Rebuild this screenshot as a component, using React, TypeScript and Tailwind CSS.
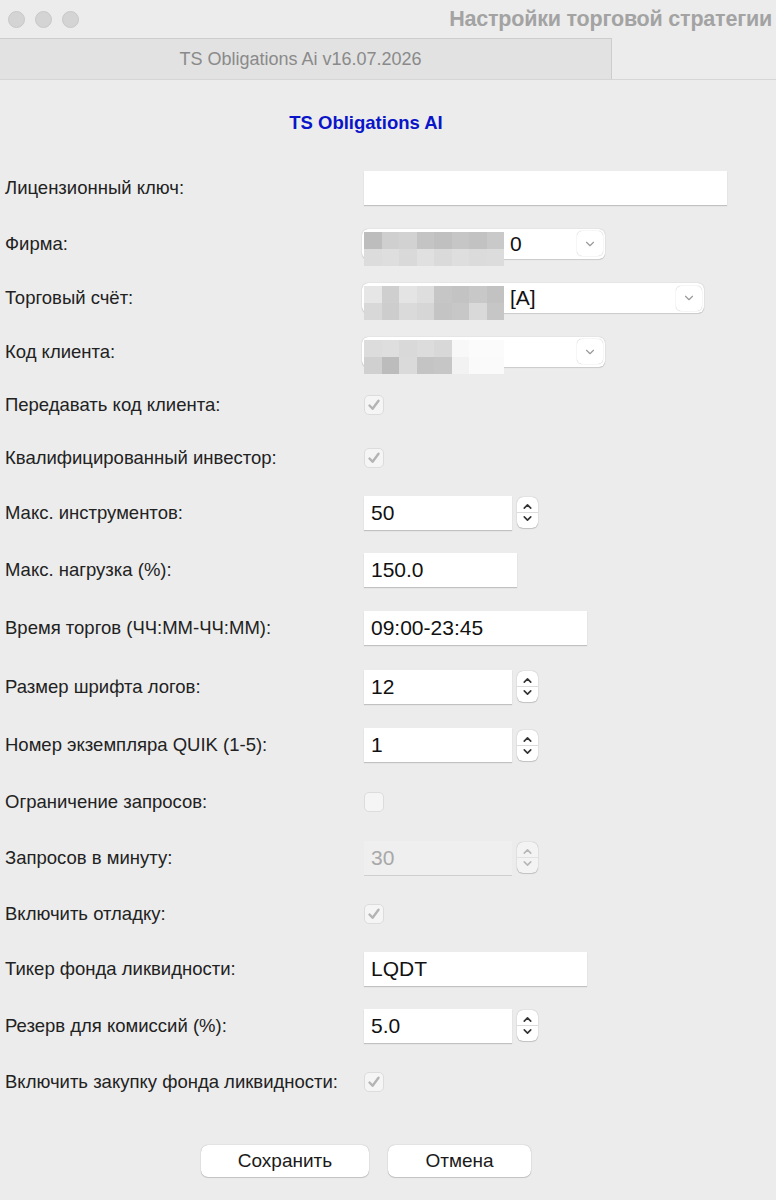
import { ChevronDown, ChevronUp } from 'lucide-react';

const font = "font-['Liberation_Sans','Helvetica',sans-serif]";

function Mosaic({ cells }: { cells: string[][] }) {
  return (
    <div className="absolute left-[2px] top-[3px] flex flex-col">
      {cells.map((row, r) => (
        <div key={r} className="flex">
          {row.map((c, i) => (
            <div key={i} className={`h-[17px] w-[17.5px] ${c}`} />
          ))}
        </div>
      ))}
    </div>
  );
}

function TextField({ value = '', w, disabled = false }: { value?: string; w: string; disabled?: boolean }) {
  return (
    <div
      className={`flex h-[34px] items-center px-[7px] text-[21px] ${w} ${
        disabled
          ? 'bg-[#efefef] text-[#a8a8a8] shadow-[0_1px_0_rgba(0,0,0,0.12)]'
          : 'bg-white text-[#111] shadow-[0_1px_1px_rgba(0,0,0,0.18)]'
      }`}
    >
      {value}
    </div>
  );
}

function Spinner({ value, disabled = false }: { value: string; disabled?: boolean }) {
  return (
    <div className="flex items-center gap-[5px]">
      <TextField value={value} w="w-[148px]" disabled={disabled} />
      <div
        className={`flex h-[31px] w-[21px] flex-col items-center justify-center rounded-[6px] shadow-[0_0_1px_rgba(0,0,0,0.35),0_1px_1px_rgba(0,0,0,0.15)] ${
          disabled ? 'bg-[#f3f3f3] text-[#b8b8b8]' : 'bg-white text-[#333]'
        }`}
      >
        <ChevronUp size={13} strokeWidth={3} className="-mb-[1px]" />
        <div className={`h-px w-full ${disabled ? 'bg-[#e2e2e2]' : 'bg-[#dcdcdc]'}`} />
        <ChevronDown size={13} strokeWidth={3} className="-mt-[1px]" />
      </div>
    </div>
  );
}

function Combo({ w, text, cells }: { w: string; text: string; cells: string[][] }) {
  return (
    <div
      className={`relative -ml-[2px] flex h-[30px] items-center justify-between rounded-[6px] bg-white pr-[2px] shadow-[0_0_1px_rgba(0,0,0,0.3),0_1px_1px_rgba(0,0,0,0.12)] ${w}`}
    >
      <span className="pl-[148px] text-[21px] text-[#111]">{text}</span>
      <div className="flex h-[25px] w-[26px] items-center justify-center rounded-[5px] bg-white text-[#9a9a9a] shadow-[0_0_1px_rgba(0,0,0,0.35)]">
        <ChevronDown size={14} strokeWidth={2} />
      </div>
      <Mosaic cells={cells} />
    </div>
  );
}

function Check({ checked }: { checked: boolean }) {
  return (
    <div className="flex h-[20px] w-[20px] items-center justify-center rounded-[5px] border border-[#dcdcdc] bg-[#f5f5f5]">
      {checked && (
        <svg width="14" height="14" viewBox="0 0 14 14" fill="none">
          <path d="M2.5 7.5 L5.6 10.8 L11.5 2.8" stroke="#b4b4b4" strokeWidth="2.4" strokeLinecap="round" strokeLinejoin="round" />
        </svg>
      )}
    </div>
  );
}

const firmaCells = [
  ['bg-[#bdbdbd]', 'bg-[#cfcfcf]', 'bg-[#d2d2d2]', 'bg-[#c4c4c4]', 'bg-[#c0c0c0]', 'bg-[#c6c6c6]', 'bg-[#c2c2c2]', 'bg-[#c9c9c9]'],
  ['bg-[#dcdcdc]', 'bg-[#dedede]', 'bg-[#d9d9d9]', 'bg-[#e0e0e0]', 'bg-[#dadada]', 'bg-[#dedede]', 'bg-[#dbdbdb]', 'bg-[#dcdcdc]'],
];
const accountCells = [
  ['bg-[#e6e6e6]', 'bg-[#cfcfcf]', 'bg-[#e4e4e4]', 'bg-[#dedede]', 'bg-[#c6c6c6]', 'bg-[#c3c3c3]', 'bg-[#c8c8c8]', 'bg-[#c2c2c2]'],
  ['bg-[#d8d8d8]', 'bg-[#cdcdcd]', 'bg-[#dadada]', 'bg-[#d6d6d6]', 'bg-[#c4c4c4]', 'bg-[#c7c7c7]', 'bg-[#d9d9d9]', 'bg-[#c6c6c6]'],
];
const clientCells = [
  ['bg-[#dcdcdc]', 'bg-[#dedede]', 'bg-[#d9d9d9]', 'bg-[#dcdcdc]', 'bg-[#d8d8d8]', 'bg-[#f8f8f8]', 'bg-[#fbfbfb]', 'bg-[#fbfbfb]'],
  ['bg-[#d0d0d0]', 'bg-[#bcbcbc]', 'bg-[#dadada]', 'bg-[#c4c4c4]', 'bg-[#c6c6c6]', 'bg-[#f2f2f2]', 'bg-[#fafafa]', 'bg-[#fafafa]'],
];

type Row = { label: string; h: string; field: React.ReactNode };

export default function App() {
  const rows: Row[] = [
    { label: 'Лицензионный ключ:', h: 'h-[56px]', field: <TextField w="w-[363px]" /> },
    { label: 'Фирма:', h: 'h-[55px]', field: <Combo w="w-[243px]" text="0" cells={firmaCells} /> },
    { label: 'Торговый счёт:', h: 'h-[54px]', field: <Combo w="w-[342px]" text="[A]" cells={accountCells} /> },
    { label: 'Код клиента:', h: 'h-[53px]', field: <Combo w="w-[243px]" text="" cells={clientCells} /> },
    { label: 'Передавать код клиента:', h: 'h-[53px]', field: <Check checked /> },
    { label: 'Квалифицированный инвестор:', h: 'h-[53px]', field: <Check checked /> },
    { label: 'Макс. инструментов:', h: 'h-[57px]', field: <Spinner value="50" /> },
    { label: 'Макс. нагрузка (%):', h: 'h-[58px]', field: <TextField value="150.0" w="w-[153px]" /> },
    { label: 'Время торгов (ЧЧ:ММ-ЧЧ:ММ):', h: 'h-[58px]', field: <TextField value="09:00-23:45" w="w-[223px]" /> },
    { label: 'Размер шрифта логов:', h: 'h-[59px]', field: <Spinner value="12" /> },
    { label: 'Номер экземпляра QUIK (1-5):', h: 'h-[58px]', field: <Spinner value="1" /> },
    { label: 'Ограничение запросов:', h: 'h-[55px]', field: <Check checked={false} /> },
    { label: 'Запросов в минуту:', h: 'h-[57px]', field: <Spinner value="30" disabled /> },
    { label: 'Включить отладку:', h: 'h-[55px]', field: <Check checked /> },
    { label: 'Тикер фонда ликвидности:', h: 'h-[56px]', field: <TextField value="LQDT" w="w-[223px]" /> },
    { label: 'Резерв для комиссий (%):', h: 'h-[57px]', field: <Spinner value="5.0" /> },
    { label: 'Включить закупку фонда ликвидности:', h: 'h-[56px]', field: <Check checked /> },
  ];

  return (
    <div className={`h-[1200px] w-[776px] overflow-hidden bg-[#ececec] ${font}`}>
      {/* Title bar */}
      <div className="flex h-[38px] items-center justify-between pl-[8px] pr-[4px]">
        <div className="flex gap-[10px]">
          <div className="h-[17px] w-[17px] rounded-full border border-[#c8c8c8] bg-[#d4d4d4]" />
          <div className="h-[17px] w-[17px] rounded-full border border-[#c8c8c8] bg-[#d4d4d4]" />
          <div className="h-[17px] w-[17px] rounded-full border border-[#c8c8c8] bg-[#d4d4d4]" />
        </div>
        <div className="text-[21.5px] font-bold tracking-[-0.2px] text-[#a3a3a3]">Настройки торговой стратегии</div>
      </div>

      {/* Tab bar */}
      <div className="flex h-[42px] border-b border-[#d6d6d6]">
        <div className="flex w-[612px] items-center justify-center border-t border-r border-[#cdcdcd] bg-[#e2e2e2] pr-[10px] text-[18px] text-[#8a8a8a]">
          TS Obligations Ai v16.07.2026
        </div>
      </div>

      {/* Header */}
      <div className="flex h-[80px] justify-center pr-[44px] pt-[32px]">
        <div className="text-[18.5px] font-bold leading-[22px] text-[#0a14c8]">TS Obligations AI</div>
      </div>

      {/* Form rows */}
      <div className="flex flex-col">
        {rows.map((row) => (
          <div key={row.label} className={`flex items-center ${row.h}`}>
            <div className="w-[364px] pl-[5px] text-[18.5px] text-[#222]">{row.label}</div>
            {row.field}
          </div>
        ))}
      </div>

      {/* Buttons */}
      <div className="flex gap-[19px] pl-[201px] pt-[35px]">
        <button className="h-[32px] w-[168px] rounded-[7px] bg-white text-[19px] text-[#1a1a1a] shadow-[0_0_1px_rgba(0,0,0,0.35),0_1px_1px_rgba(0,0,0,0.15)]">
          Сохранить
        </button>
        <button className="h-[32px] w-[143px] rounded-[7px] bg-white text-[19px] text-[#1a1a1a] shadow-[0_0_1px_rgba(0,0,0,0.35),0_1px_1px_rgba(0,0,0,0.15)]">
          Отмена
        </button>
      </div>
    </div>
  );
}
